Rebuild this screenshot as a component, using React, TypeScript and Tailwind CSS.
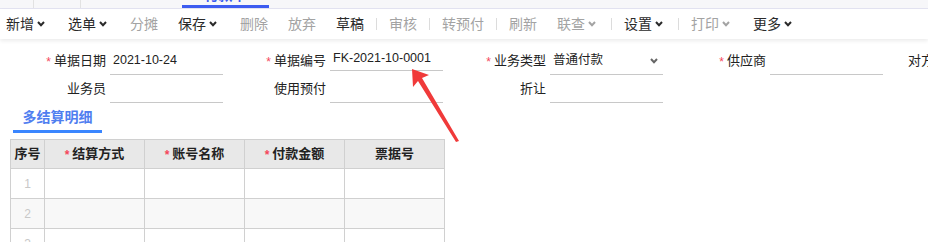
import React from 'react';

const font = { fontFamily: '"Liberation Sans", "Noto Sans CJK SC", sans-serif' };

function Chevron({ className }: { className: string }) {
  return (
    <svg width="8" height="6" viewBox="0 0 8 6" className={className}>
      <polyline points="1,1 4,4.2 7,1" fill="none" stroke="currentColor" strokeWidth="2" />
    </svg>
  );
}

type ToolItem = { label: string; dim?: boolean; menu?: boolean; divider?: boolean };

const tools: ToolItem[] = [
  { label: '新增', menu: true },
  { label: '选单', menu: true },
  { label: '分摊', dim: true },
  { label: '保存', menu: true },
  { label: '删除', dim: true },
  { label: '放弃', dim: true },
  { label: '草稿' },
  { label: '', divider: true },
  { label: '审核', dim: true },
  { label: '', divider: true },
  { label: '转预付', dim: true },
  { label: '', divider: true },
  { label: '刷新', dim: true },
  { label: '联查', dim: true, menu: true },
  { label: '', divider: true },
  { label: '设置', menu: true },
  { label: '', divider: true },
  { label: '打印', dim: true, menu: true },
  { label: '更多', menu: true },
];

function Star() {
  return <span className="text-[#f5475b] text-[12px] mr-[3px] relative top-[1px]">*</span>;
}

function Field({
  label,
  required,
  value,
  select,
  raised,
}: {
  label: string;
  required?: boolean;
  value?: string;
  select?: boolean;
  raised?: boolean;
}) {
  return (
    <div className="w-[220px] shrink-0 flex items-center h-[28px]">
      <div className="w-[107px] shrink-0 pr-[4px] text-right whitespace-nowrap text-[13px] text-[#222]">
        {required && <Star />}
        {label}
      </div>
      <div
        className={`w-[113px] shrink-0 flex items-center justify-between pl-[3px] pr-[5px] border-b border-[#c8c8c8] text-[12.5px] text-[#222] ${
          raised ? 'h-[24px] mb-[5px]' : 'h-[27px]'
        }`}
      >
        <span className="whitespace-nowrap">{value}</span>
        {select && <Chevron className="text-[#666]" />}
      </div>
    </div>
  );
}

export default function App() {
  return (
    <div className="w-[928px] h-[242px] overflow-hidden bg-white relative" style={font}>
      {/* top tab strip */}
      <div className="h-[9px] bg-[#f7f7f9] border-b border-[#e4e4f2] flex overflow-hidden">
        <div className="ml-[33px] w-px h-full bg-[#e2e2e2]" />
        <div className="ml-[46px] w-px h-full bg-[#e2e2e2]" />
        <div className="ml-[101px] w-[87px] h-[8px] flex flex-col items-center justify-end border-b-[3px] border-[#3d5cf0] overflow-hidden">
          <span className="text-[14px] leading-[14px] text-[#3d5cf0] font-bold -mb-[9px] pb-[12px]">付款单</span>
        </div>
      </div>

      {/* toolbar */}
      <div className="h-[30px] flex items-center gap-[20px] pl-[6px] bg-white shadow-[0_2px_4px_rgba(0,0,0,0.08)] relative">
        {tools.map((t, i) =>
          t.divider ? (
            <div key={i} className="w-px h-[12px] bg-[#dcdcdc] -mx-[8px]" />
          ) : (
            <div
              key={i}
              className={`flex items-center text-[14px] whitespace-nowrap ${t.dim ? 'text-[#a3a3a3]' : 'text-[#2a2a2a]'} ${t.menu ? 'pr-[3px]' : ''}`}
            >
              {t.label}
              {t.menu && <Chevron className="ml-[3px]" />}
            </div>
          )
        )}
      </div>

      {/* form */}
      <div className="mt-[8px] pl-[3px]">
        <div className="flex">
          <Field label="单据日期" required value="2021-10-24" />
          <Field label="单据编号" required value="FK-2021-10-0001" raised />
          <Field label="业务类型" required value="普通付款" select />
          <Field label="供应商" required />
          <Field label="对方账户名称" />
        </div>
        <div className="flex">
          <Field label="业务员" />
          <Field label="使用预付" />
          <Field label="折让" />
        </div>
      </div>

      {/* detail tab */}
      <div className="ml-[13px] mt-[1px] w-[89px] h-[29px] flex items-center justify-center border-b-[3px] border-[#3a86ff] text-[14px] font-bold text-[#4f7ef0]">
        多结算明细
      </div>

      {/* table */}
      <table className="ml-[10px] mt-[6px] border-collapse text-[13px]">
        <thead>
          <tr className="h-[29px] bg-[#e8e8e8]">
            <th className="w-[34px] border border-[#d0d0d0] font-bold text-[#222]">序号</th>
            <th className="w-[100px] border border-[#d0d0d0] font-bold text-[#222]">
              <Star />结算方式
            </th>
            <th className="w-[100px] border border-[#d0d0d0] font-bold text-[#222]">
              <Star />账号名称
            </th>
            <th className="w-[100px] border border-[#d0d0d0] font-bold text-[#222]">
              <Star />付款金额
            </th>
            <th className="w-[100px] border border-[#d0d0d0] font-bold text-[#222]">票据号</th>
          </tr>
        </thead>
        <tbody>
          {[1, 2, 3].map((n) => (
            <tr key={n} className={`h-[30px] ${n === 2 ? 'bg-[#f8f8f8]' : 'bg-white'}`}>
              <td className="border border-[#d0d0d0] text-center text-[12px] text-[#c8c8c8]">{n}</td>
              <td className="border border-[#d0d0d0]" />
              <td className="border border-[#d0d0d0]" />
              <td className="border border-[#d0d0d0]" />
              <td className="border border-[#d0d0d0]" />
            </tr>
          ))}
        </tbody>
      </table>

      {/* annotation arrow */}
      <svg className="absolute left-0 top-0 pointer-events-none" width="928" height="242">
        <polygon points="412,69 413,87 418,81 456,142 459,141 422,78 429,75" fill="#f03a3a" />
      </svg>
    </div>
  );
}
